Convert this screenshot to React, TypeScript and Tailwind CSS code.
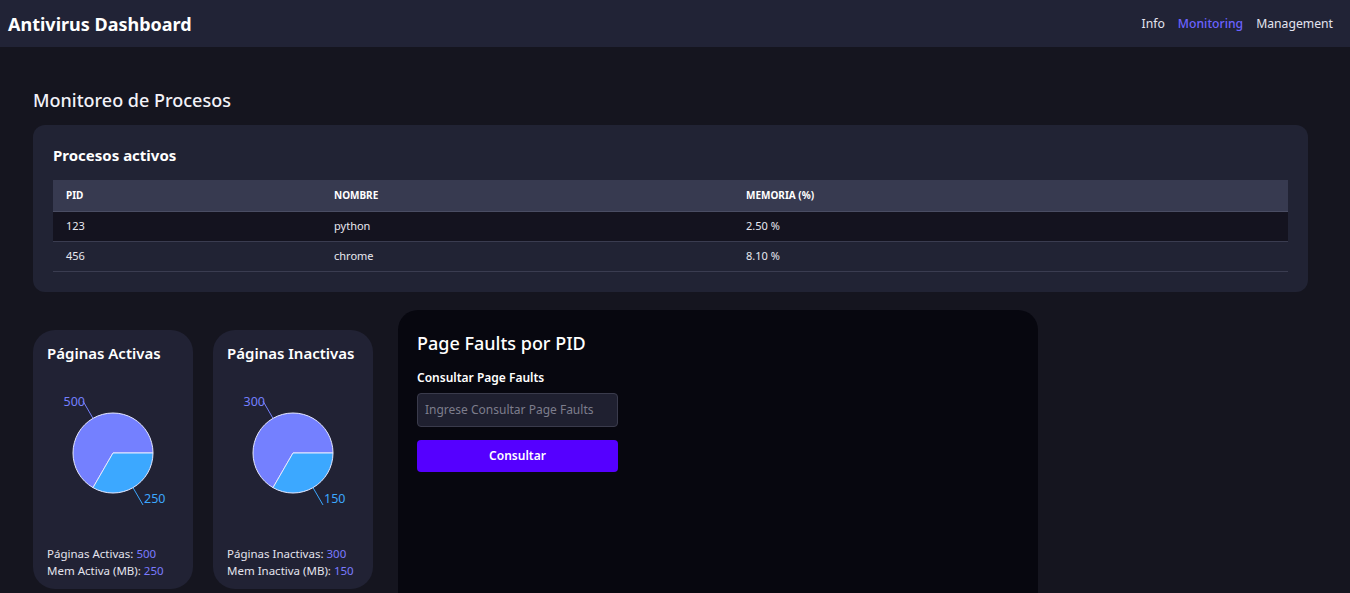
import React from 'react';

const FONT = { fontFamily: '"Noto Sans", "Open Sans", sans-serif' };

const PROCESSES = [
  { pid: 123, name: 'python', mem: '2.50 %' },
  { pid: 456, name: 'chrome', mem: '8.10 %' },
];

function polar(cx: number, cy: number, r: number, deg: number) {
  const a = (deg * Math.PI) / 180;
  return [cx + r * Math.cos(a), cy - r * Math.sin(a)];
}

function Pie({ a, b }: { a: number; b: number }) {
  const cx = 66;
  const cy = 80;
  const r = 40;
  const split = (a / (a + b)) * 360;
  const [sx, sy] = polar(cx, cy, r, 0);
  const [mx, my] = polar(cx, cy, r, split);
  const big = `M${cx},${cy} L${sx},${sy} A${r},${r} 0 ${split > 180 ? 1 : 0} 0 ${mx},${my} Z`;
  const small = `M${cx},${cy} L${mx},${my} A${r},${r} 0 ${split > 180 ? 0 : 1} 0 ${sx},${sy} Z`;
  const midA = split / 2;
  const midB = split + (360 - split) / 2;
  const [a1x, a1y] = polar(cx, cy, r, midA);
  const [a2x, a2y] = polar(cx, cy, r + 20, midA);
  const [b1x, b1y] = polar(cx, cy, r, midB);
  const [b2x, b2y] = polar(cx, cy, r + 20, midB);
  return (
    <svg width="132" height="160" viewBox="0 0 132 160" className="block">
      <path d={big} fill="#7480ff" stroke="#e6e8ff" strokeWidth="1" />
      <path d={small} fill="#3ca8ff" stroke="#e6e8ff" strokeWidth="1" />
      <path d={`M${a1x},${a1y} L${a2x},${a2y}`} stroke="#7480ff" fill="none" />
      <path d={`M${b1x},${b1y} L${b2x},${b2y}`} stroke="#3ca8ff" fill="none" />
      <text x={a2x + 2} y={a2y} textAnchor="end" dominantBaseline="central" fill="#7480ff" fontSize="12.5">
        {a}
      </text>
      <text x={b2x + 1} y={b2y - 6} textAnchor="start" dominantBaseline="central" fill="#3ca8ff" fontSize="12.5">
        {b}
      </text>
    </svg>
  );
}

function PagesCard({ title, a, b, labelA, labelB }: { title: string; a: number; b: number; labelA: string; labelB: string }) {
  return (
    <div className="mt-[20px] h-[259px] w-[160px] shrink-0 rounded-[22px] bg-[#212234] px-[14px] pt-[11px]">
      <h3 className="whitespace-nowrap text-[15px] font-semibold leading-6 text-white">{title}</h3>
      <div className="mt-[8px]">
        <Pie a={a} b={b} />
      </div>
      <div className="mt-[12px] whitespace-nowrap text-[11.5px] leading-[17px] text-[#e4e4ee]">
        <p>
          {labelA}: <span className="text-[#7b7bff]">{a}</span>
        </p>
        <p>
          {labelB}: <span className="text-[#7b7bff]">{b}</span>
        </p>
      </div>
    </div>
  );
}

export default function App() {
  return (
    <div className="h-[593px] overflow-hidden bg-[#15151f] text-white" style={FONT}>
      <header className="flex h-[47px] items-center justify-between bg-[#212336] pl-[8px] pr-[17px] pt-[1px]">
        <h1 className="text-[18px] font-bold text-white">Antivirus Dashboard</h1>
        <nav className="flex items-center gap-[13px] text-[12.2px]">
          <a className="text-[#e4e4f0]">Info</a>
          <a className="font-medium text-[#6b62ff]">Monitoring</a>
          <a className="text-[#e4e4f0]">Management</a>
        </nav>
      </header>

      <main className="px-[33px] pt-[40px]">
        <h2 className="text-[18px] font-medium leading-[26px] text-[#f2f2f8]">Monitoreo de Procesos</h2>

        <section className="mt-[12px] w-[1275px] rounded-[12px] bg-[#212334] px-[20px] pb-[20px] pt-[20px]">
          <h3 className="text-[15px] font-bold leading-5 text-white">Procesos activos</h3>
          <table className="mt-[15px] w-full border-collapse text-left text-[11px]">
            <thead>
              <tr className="h-[31px] bg-[#373a50]">
                <th className="w-[268px] border-b border-[#4a4d63] pl-[13px] text-[10px] font-bold uppercase">PID</th>
                <th className="w-[412px] border-b border-[#4a4d63] pl-[13px] text-[10px] font-bold uppercase">Nombre</th>
                <th className="border-b border-[#4a4d63] pl-[13px] text-[10px] font-bold uppercase">Memoria (%)</th>
              </tr>
            </thead>
            <tbody>
              {PROCESSES.map((p, i) => (
                <tr key={p.pid} className={`h-[30px] border-b border-[#3a3c50] ${i === 0 ? 'bg-[#14131f]' : 'bg-[#212334]'}`}>
                  <td className="pl-[13px] text-[#e8e8f0]">{p.pid}</td>
                  <td className="pl-[13px] text-[#e8e8f0]">{p.name}</td>
                  <td className="pl-[13px] text-[#e8e8f0]">{p.mem}</td>
                </tr>
              ))}
            </tbody>
          </table>
        </section>

        <div className="mt-[18px] flex items-start">
          <PagesCard title="Páginas Activas" a={500} b={250} labelA="Páginas Activas" labelB="Mem Activa (MB)" />
          <div className="w-[20px] shrink-0" />
          <PagesCard title="Páginas Inactivas" a={300} b={150} labelA="Páginas Inactivas" labelB="Mem Inactiva (MB)" />
          <div className="w-[25px] shrink-0" />
          <section className="h-[320px] w-[640px] shrink-0 rounded-[20px] bg-[#07070f] px-[19px] pt-[20px]">
            <h3 className="text-[18px] font-medium leading-[26px] text-white">Page Faults por PID</h3>
            <label className="mt-[13px] block text-[12px] font-semibold leading-[18px] text-white">Consultar Page Faults</label>
            <input
              placeholder="Ingrese Consultar Page Faults"
              className="mt-[6px] block h-[34px] w-[201px] rounded-[4px] border border-[#3a3b4c] bg-[#1f2030] px-[7px] text-[12px] text-white placeholder:text-[#7d7d8c] outline-none"
            />
            <button className="mt-[13px] block h-[32px] w-[201px] rounded-[4px] bg-[#5500ff] text-[12px] font-semibold text-white">
              Consultar
            </button>
          </section>
        </div>
      </main>
    </div>
  );
}
